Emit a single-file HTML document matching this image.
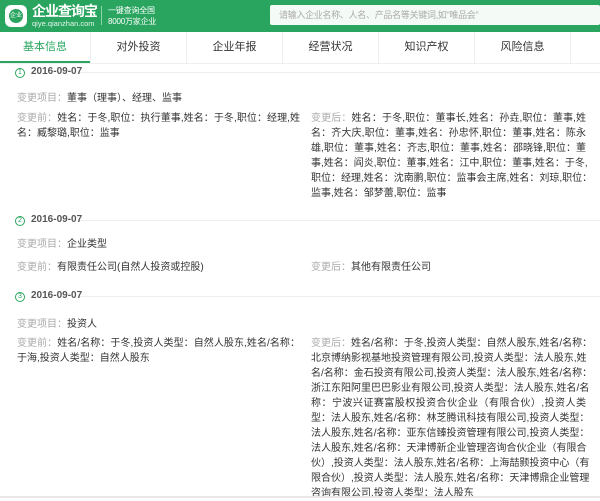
<!DOCTYPE html><html><head><meta charset="utf-8"><style>
body{margin:0;width:600px;height:498px;overflow:hidden;background:#fff;font-family:"Liberation Sans","Noto Sans CJK SC",sans-serif;position:relative}
.a{position:absolute;white-space:nowrap;font-size:10px;color:#333;line-height:14px}
.g{color:#aaa}
.c{position:absolute;font-size:10px;color:#333;white-space:nowrap}
.c div{height:15px;line-height:15px;text-align:justify;text-align-last:justify}
.c div.l{text-align-last:left}
.L{left:17px}.L div{width:283px}
.R{left:311px}.R div{width:275px}
.hd{position:absolute;left:0;top:0;width:600px;height:32px;background:#2aa55f}
.tabs{position:absolute;top:32px;left:0;width:600px;height:31px;border-bottom:1px solid #eee}
.tab{position:absolute;top:0;height:31px;line-height:31px;text-align:center;font-size:11px;color:#333;border-right:1px solid #eee}
.dt{position:absolute;left:15px;font-size:10px;color:#555;font-weight:bold;line-height:12px}
.dt i{display:inline-block;width:8px;height:8px;border:1px solid #2aa55f;border-radius:50%;font-style:normal;font-size:7px;line-height:8px;text-align:center;color:#2aa55f;margin-right:6px;font-weight:normal;vertical-align:0}
.ln{position:absolute;height:1px;background:#eee;left:80px;right:0}
</style></head><body>
<div class="hd"></div>
<div style="position:absolute;left:5px;top:5px;width:22px;height:22px;border-radius:6px;background:#fff"></div>
<div style="position:absolute;left:9px;top:9px;width:14px;height:14px;border-radius:50%;background:#2aa55f;color:#fff;font-size:6px;line-height:14px;text-align:center">企业</div>
<div style="position:absolute;left:32px;top:3px;color:#fff;font-size:14px;font-weight:bold;line-height:16px;letter-spacing:-1px;white-space:nowrap">企业查询宝</div>
<div style="position:absolute;left:32px;top:19px;color:#e6f5ec;font-size:7.5px;line-height:9px;white-space:nowrap">qiye.qianzhan.com</div>
<div style="position:absolute;left:101px;top:6px;width:1px;height:19px;background:#8fd3aa"></div>
<div style="position:absolute;left:108px;top:5px;color:#fff;font-size:8px;line-height:11px;letter-spacing:-0.2px;white-space:nowrap">一键查询全国<br>8000万家企业</div>
<div style="position:absolute;left:270px;top:5px;width:330px;height:20px;background:#f4faf6;border-radius:2px"></div>
<div class="a" style="left:279px;top:8px;color:#aaa;font-size:9px;letter-spacing:-0.3px">请输入企业名称、人名、产品名等关键词,如"唯品会"</div>
<div class="tabs">
<div class="tab" style="left:0;width:90px;color:#2aa55f">基本信息</div>
<div class="tab" style="left:91px;width:95px">对外投资</div>
<div class="tab" style="left:187px;width:95px">企业年报</div>
<div class="tab" style="left:283px;width:95px">经营状况</div>
<div class="tab" style="left:379px;width:95px">知识产权</div>
<div class="tab" style="left:475px;width:95px">风险信息</div>
</div>
<div style="position:absolute;left:0;top:61px;width:90px;height:2px;background:#2aa55f"></div>

<div class="dt" style="top:66px"><i>1</i>2016-09-07</div><div class="ln" style="top:72px"></div>
<div class="a" style="left:17px;top:92px"><span class="g">变更项目：</span>董事（理事）、经理、监事</div>
<div class="c L" style="top:111px"><div><span class="g">变更前：</span>姓名：于冬,职位：执行董事,姓名：于冬,职位：经理,姓</div><div class="l">名：臧黎璐,职位：监事</div></div>
<div class="c R" style="top:111px"><div><span class="g">变更后：</span>姓名：于冬,职位：董事长,姓名：孙垚,职位：董事,姓</div><div>名：齐大庆,职位：董事,姓名：孙忠怀,职位：董事,姓名：陈永</div><div>雄,职位：董事,姓名：齐志,职位：董事,姓名：邵晓锋,职位：董</div><div>事,姓名：阎炎,职位：董事,姓名：江中,职位：董事,姓名：于冬,</div><div>职位：经理,姓名：沈南鹏,职位：监事会主席,姓名：刘琼,职位：</div><div class="l">监事,姓名：邹梦蕾,职位：监事</div></div>

<div class="dt" style="top:214px"><i>2</i>2016-09-07</div><div class="ln" style="top:220px"></div>
<div class="a" style="left:17px;top:238px"><span class="g">变更项目：</span>企业类型</div>
<div class="a" style="left:17px;top:261px"><span class="g">变更前：</span>有限责任公司(自然人投资或控股)</div>
<div class="a" style="left:311px;top:261px"><span class="g">变更后：</span>其他有限责任公司</div>

<div class="dt" style="top:290px"><i>3</i>2016-09-07</div><div class="ln" style="top:296px"></div>
<div class="a" style="left:17px;top:318px"><span class="g">变更项目：</span>投资人</div>
<div class="c L" style="top:336px"><div><span class="g">变更前：</span>姓名/名称：于冬,投资人类型：自然人股东,姓名/名称：</div><div class="l">于海,投资人类型：自然人股东</div></div>
<div class="c R" style="top:336px"><div><span class="g">变更后：</span>姓名/名称：于冬,投资人类型：自然人股东,姓名/名称：</div><div>北京博纳影视基地投资管理有限公司,投资人类型：法人股东,姓</div><div>名/名称：金石投资有限公司,投资人类型：法人股东,姓名/名称：</div><div>浙江东阳阿里巴巴影业有限公司,投资人类型：法人股东,姓名/名</div><div>称：宁波兴证赛富股权投资合伙企业（有限合伙）,投资人类</div><div>型：法人股东,姓名/名称：林芝腾讯科技有限公司,投资人类型：</div><div>法人股东,姓名/名称：亚东信臻投资管理有限公司,投资人类型：</div><div>法人股东,姓名/名称：天津博新企业管理咨询合伙企业（有限合</div><div>伙）,投资人类型：法人股东,姓名/名称：上海喆颢投资中心（有</div><div>限合伙）,投资人类型：法人股东,姓名/名称：天津博鼎企业管理</div><div class="l">咨询有限公司,投资人类型：法人股东</div></div>
<div style="position:absolute;left:0;top:496px;width:600px;height:2px;background:#e8e8e8"></div>
</body></html>
